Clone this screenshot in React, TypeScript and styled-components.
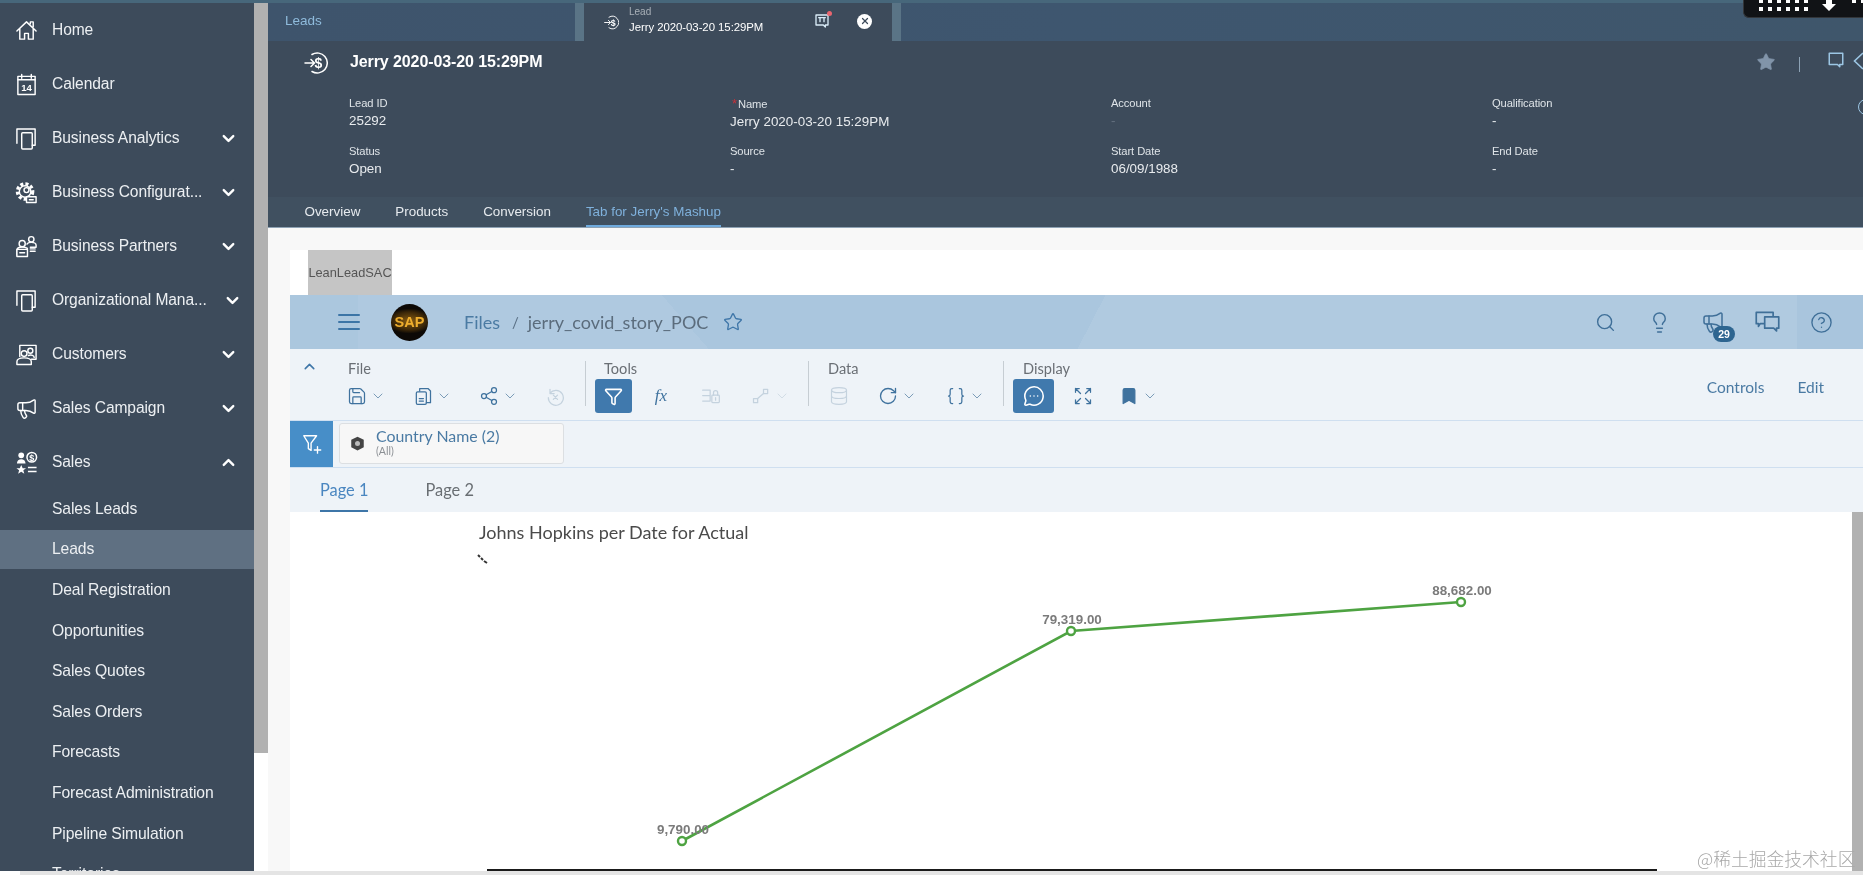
import React from "react";
import styled, { createGlobalStyle } from "styled-components";
import {
  Search, Lightbulb, Megaphone, CircleHelp, Star, Save, Share2, Funnel, Bookmark,
  ChevronDown, ChevronUp, RotateCw, Braces, MessageCircleMore, Database, X,
} from "lucide-react";

const Global = createGlobalStyle`
  html, body { margin: 0; padding: 0; width: 100%; height: 100%; overflow: hidden; background: #fff; }
  * { box-sizing: border-box; }
`;

const Page = styled.div`
  position: relative; width: 1863px; height: 875px; display: flex; flex-direction: column;
  overflow: hidden; background: #fff; font-family: "Liberation Sans", Arial, sans-serif;
  filter: blur(0.45px);
`;
const TopStrip = styled.div`height: 3px; flex: none; background: #47677b;`;
const Body = styled.div`flex: 1; display: flex; min-height: 0;`;
const BottomStrip = styled.div`height: 4px; flex: none; background: linear-gradient(to right, #fff 20px, #e4e4e4 20px);`;

const Sidebar = styled.nav`width: 254px; flex: none; background: #3d4b5b; overflow: hidden;`;
const SideRow = styled.div<{ $sub?: boolean; $active?: boolean; $trim?: number }>`
  display: flex; align-items: center; color: #eceff2;
  height: ${(p) => (p.$sub ? "40.6px" : "54px")};
  padding: 0 ${(p) => 16 - (p.$trim ?? 0)}px 0 ${(p) => (p.$sub ? 52 : 15)}px;
  font-size: ${(p) => (p.$sub ? "15.7px" : "15.6px")};
  background: ${(p) => (p.$active ? "linear-gradient(#5f7082, #5f7082) center / 100% 39px no-repeat" : "none")};
`;
const SideIcon = styled.span`
  width: 23px; height: 23px; flex: none; margin-right: 14px; display: flex; color: #fff;
  svg { width: 23px; height: 23px; }
`;
const SideLabel = styled.span`flex: 1; white-space: nowrap; min-width: 0; letter-spacing: -0.1px; padding-bottom: 1px;`;
const SideChevron = styled.span`flex: none; display: flex; color: #fff;`;

const ScrollTrack = styled.div`width: 14px; flex: none; background: #fff;`;
const ScrollThumb = styled.div`height: 750px; background: #b1b1b1;`;

const Main = styled.main`flex: 1; min-width: 0; display: flex; flex-direction: column; overflow: hidden;`;
const TabsRow = styled.div`
  height: 38px; flex: none; display: flex; align-items: stretch;
  background: linear-gradient(90deg, #3e546c, #3e566f 50%, #3f566b);
`;
const LeadsTab = styled.div`width: 307px; flex: none; padding: 0 0 3px 17px; display: flex; align-items: center; font-size: 13.5px; color: #8fbbdc;`;
const TabSplit = styled.div`width: 9px; flex: none; background: #5a7486;`;
const ActiveTab = styled.div`
  width: 308px; flex: none; background: #3d4b5b; display: flex; align-items: center; padding-left: 20px; color: #fff;
`;
const ActiveText = styled.div`margin-left: 10px; display: flex; flex-direction: column; width: 185px; padding-bottom: 5px;`;
const ActiveKind = styled.span`font-size: 10px; line-height: 13px; color: #a9b1b8;`;
const ActiveName = styled.span`font-size: 11.4px; line-height: 16px; margin-top: 1px; letter-spacing: -0.05px; white-space: nowrap;`;
const NoticeIcon = styled.span`position: relative; display: flex; width: 16px; height: 16px; margin-top: -2px; color: #d9ecf8;`;
const NoticeDot = styled.span`position: absolute; top: -2px; right: -2px; width: 5px; height: 5px; border-radius: 50%; background: #e8656f;`;
const CloseCircle = styled.span`
  margin-left: 27px; margin-top: -2px; width: 15px; height: 15px; border-radius: 50%; background: #fff; color: #3d4b5b;
  display: flex; align-items: center; justify-content: center;
`;

const Header = styled.header`height: 156px; flex: none; background: #3d4b5b; color: #fff;`;
const TitleRow = styled.div`height: 44px; display: flex; align-items: center; padding-left: 36px;`;
const Title = styled.h1`margin: 0 0 2px 22px; font-size: 16px; font-weight: 700; letter-spacing: -0.1px;`;
const TitleActions = styled.div`margin-left: auto; display: flex; align-items: center; color: #9cc6e4;`;
const StarAction = styled.span`display: flex; margin-top: -2px; color: #8194a9;`;
const ActionRule = styled.span`width: 1px; height: 15px; background: #8da2b5; margin: 3px 27px 0 23px;`;
const ActionBubble = styled.span`display: flex; margin-top: -6px;`;
const ActionEdge = styled.svg`width: 10px; height: 20px; margin: -4px 0 0 8px;`;

const FieldGrid = styled.div`
  display: grid; grid-template-columns: 381px 381px 381px 366px 20px; grid-auto-rows: 48px;
  padding: 9.5px 0 0 81px;
`;
const Field = styled.div`display: flex; flex-direction: column;`;
const FieldLabel = styled.span`font-size: 11.2px; line-height: 17px; color: #dfe4e8; letter-spacing: -0.1px;`;
const Required = styled.span`color: #c8303a; font-size: 13px; margin: 0 1px 0 2px;`;
const FieldValue = styled.span<{ $dim?: boolean }>`
  font-size: 13.4px; line-height: 17px; color: ${(p) => (p.$dim ? "#64717f" : "#e8ebee")};
`;
const EdgeCircle = styled.span`
  grid-column: 5; grid-row: 1; width: 16px; height: 16px; margin-top: 4px;
  border: 1.5px solid #9cc6e4; border-radius: 50%;
`;

const ObjectTabs = styled.div`
  height: 31px; flex: none; display: flex; gap: 35px; padding-left: 36.5px;
  background: #405060; border-bottom: 1px solid #8ea2b4;
`;
const ObjectTab = styled.div<{ $active?: boolean }>`
  height: 30px; display: flex; align-items: center; font-size: 13.4px; padding-top: 1px; white-space: nowrap;
  color: ${(p) => (p.$active ? "#7fb1dc" : "#e6eaee")};
  border-bottom: 2px solid ${(p) => (p.$active ? "#6faadd" : "transparent")};
`;

const WorkArea = styled.section`flex: 1; min-height: 0; background: #f8f8f8; padding: 22px 0 0 22px; display: flex;`;
const Mashup = styled.div`flex: 1; min-width: 0; background: #fff; display: flex; flex-direction: column; font-family: Lato, "Liberation Sans", sans-serif;`;
const LeanRow = styled.div`height: 45px; flex: none; padding-left: 18px; display: flex;`;
const LeanTag = styled.div`
  width: 84px; background: #c5c5c5; color: #555; font-family: "Liberation Sans", sans-serif; font-size: 12.8px;
  display: flex; align-items: center; justify-content: center; white-space: nowrap;
`;

const ShellBar = styled.div`
  height: 54px; flex: none; display: flex; align-items: center; padding: 0 15px 0 48px; color: #3f6f98;
  background:
    linear-gradient(to right, transparent calc(100% - 66px), #a9c5dd 0),
    linear-gradient(to right, #abc7de 68px, transparent 68px),
    linear-gradient(49deg, #afc9e0 316px, transparent 316px),
    linear-gradient(117.4deg, #aac6de 724px, transparent 724px),
    #b0cae0;
`;
const Hamburger = styled.span`
  width: 22px; height: 16px; flex: none; display: flex; flex-direction: column; justify-content: space-between;
  & > i { display: block; height: 2.4px; background: #3c75a6; border-radius: 1px; }
`;
const SapLogo = styled.span`
  width: 37px; height: 37px; flex: none; margin-left: 31px; border-radius: 50%; overflow: hidden;
  background: radial-gradient(ellipse 62% 34% at 50% 46%, #8a5d12, #3a2608 72%, #0d0906 100%);
  color: #eeae2e; font: 700 14.5px "Liberation Sans", sans-serif; display: flex; align-items: center; justify-content: center;
`;
const Crumbs = styled.div`margin-left: 36px; display: flex; align-items: center; font-size: 18px; white-space: nowrap;`;
const CrumbLink = styled.span`color: #4b7ba3;`;
const CrumbSep = styled.span`color: #5a7085; margin: 0 9px 0 12px; font-size: 15px;`;
const CrumbStory = styled.span`color: #5b6c7c;`;
const CrumbStar = styled.span`display: flex; margin-left: 15px; color: #3f76a8;`;
const ShellIcons = styled.div`margin-left: auto; display: flex;`;
const ShellIcon = styled.span`
  position: relative; width: 54px; height: 30px; display: flex; align-items: center; justify-content: center;
`;
const CountBadge = styled.span`
  position: absolute; left: 27px; top: 19px; width: 22px; height: 16px; border-radius: 8px; background: #2e6590;
  color: #fff; font: 700 10.5px/16px "Liberation Sans", sans-serif; text-align: center;
`;

const Toolbar = styled.div`
  height: 72px; flex: none; display: flex; background: #eef3f8; border-bottom: 1px solid #cfdff0;
`;
const CollapseCell = styled.div`width: 58px; flex: none; padding: 9px 0 0 11px; color: #3f76a8;`;
const ToolGroup = styled.div<{ $w: number; $labelInset: number; $rowInset: number }>`
  width: ${(p) => p.$w}px; flex: none; padding-top: 12px;
  & > label { display: block; height: 16px; line-height: 16px; margin-left: ${(p) => p.$labelInset}px; font-size: 14.6px; color: #6a6f75; }
  & > div { margin-left: ${(p) => p.$rowInset}px; }
`;
const ToolRow = styled.div<{ $gap: number }>`
  margin-top: 2px; height: 34px; display: flex; align-items: center; gap: ${(p) => p.$gap}px;
`;
const ToolItem = styled.span<{ $faded?: boolean }>`
  display: flex; align-items: center; gap: 3px; color: ${(p) => (p.$faded ? "#c4d2de" : "#3f729e")};
  & > svg:last-child:not(:first-child) { color: ${(p) => (p.$faded ? "#d2dde6" : "#7b9cb8")}; }
`;
const ToolGlyph = styled.span`width: 20px; height: 20px; display: flex; align-items: center; justify-content: center; font: italic 400 17px "Liberation Serif", serif;`;
const ToolButton = styled.span<{ $w: number; $trail: number }>`
  width: ${(p) => p.$w}px; height: 34px; flex: none; margin-right: ${(p) => p.$trail}px; background: #4079ad; border-radius: 3px; color: #fff;
  display: flex; align-items: center; justify-content: center;
`;
const ToolRule = styled.span`width: 1px; height: 45px; flex: none; margin-top: 12px; background: #c6cdd3;`;
const ToolLinks = styled.div`margin-left: auto; height: 28px; margin-top: 24px; padding-right: 39px; display: flex; align-items: center; gap: 33px; font-size: 15.5px; color: #4a7aa3;`;

const FilterRow = styled.div`height: 47px; flex: none; display: flex; background: #eef3f8; border-bottom: 1px solid #cfdff0;`;
const AddFilter = styled.span`width: 43px; flex: none; background: #478ec8; color: #fff; display: flex; align-items: center; justify-content: center;`;
const Token = styled.div`
  width: 225px; height: 41px; margin: 2px 0 0 6px; background: #f7f7f7; border: 1px solid #dcdfe2; border-radius: 3px;
  display: flex; align-items: center; padding-left: 10px;
`;
const TokenText = styled.div`margin: -2px 0 0 11px; display: flex; flex-direction: column;`;
const TokenName = styled.span`font-size: 15.9px; line-height: 18px; color: #4a7aa3;`;
const TokenSub = styled.span`font-size: 10.6px; line-height: 13px; color: #8b8f94;`;

const PageTabs = styled.div`height: 44px; flex: none; display: flex; gap: 57px; padding-left: 30px; background: #eef3f8;`;
const PageTab = styled.div<{ $active?: boolean }>`
  height: 44px; display: flex; align-items: center; font-size: 16.4px;
  color: ${(p) => (p.$active ? "#4a86c0" : "#696e73")};
  border-bottom: 2.5px solid ${(p) => (p.$active ? "#3e76a8" : "transparent")};
`;

const Canvas = styled.div`flex: 1; min-height: 0; display: flex; background: #fff;`;
const ChartSvg = styled.svg`flex: 1; min-width: 0; height: 100%; display: block;`;
const ChartTitle = styled.text`font: 18px Lato, "Liberation Sans", sans-serif; fill: #4a4a4a;`;
const PointLabel = styled.text`font: 700 13.4px "Liberation Sans", sans-serif; fill: #7b7b7b; text-anchor: middle;`;
const CanvasScroll = styled.div`width: 11px; flex: none; background: #b1b1b1;`;

const Watermark = styled.div`
  position: absolute; left: 1697px; top: 847px; font: 300 17.8px/22px "Noto Sans CJK SC", sans-serif; color: #a8a8a8; white-space: nowrap;
`;
const Recorder = styled.div`
  position: absolute; top: 0; right: 0; width: 120px; height: 18px; background: #111316; border: 1px solid #33363a;
  border-top: 0; border-right: 0; border-radius: 0 0 0 6px; overflow: hidden; display: flex; padding-left: 15px; color: #fff;
`;
const DotGrid = styled.div`
  display: grid; grid-template-columns: repeat(6, 4px); column-gap: 5px; row-gap: 4px; margin-top: -1px; align-content: start;
  & > i { width: 4px; height: 4px; background: #fff; }
`;
const RecorderArrow = styled.span`display: flex; margin: -1px 16px 0 14px;`;

const SW = { fill: "none", stroke: "currentColor", strokeWidth: 1.5, strokeLinecap: "round" as const, strokeLinejoin: "round" as const };
const Ic = ({ children, size = 24 }: { children: React.ReactNode; size?: number }) => (
  <svg viewBox="0 0 24 24" width={size} height={size} {...SW}>{children}</svg>
);

const HomeIcon = () => <Ic><path d="M2 12.5 12 3l10 9.5M5 10v11h5v-6h4v6h5V10M16 5V3h3v5" /></Ic>;
const CalendarIcon = () => (
  <Ic>
    <rect x="3" y="3.5" width="18" height="19" />
    <path d="M7 1.5v4M17 1.5v4M3 7h18" />
    <text x="12" y="18.5" fill="currentColor" stroke="none" fontSize="10" fontWeight="700" textAnchor="middle" fontFamily="Liberation Sans">14</text>
  </Ic>
);
const StackIcon = () => <Ic><path d="M2 17V2h19v17h-3" /><rect x="7" y="6" width="11" height="17" rx="1" /></Ic>;
const ConfigIcon = () => (
  <Ic>
    <circle cx="10.5" cy="11" r="8" strokeWidth="3.4" strokeDasharray="3.2 2.2" strokeLinecap="butt" />
    <circle cx="10.5" cy="11" r="6" />
    <circle cx="12" cy="9.5" r="2.6" />
    <rect x="12" y="16.5" width="10" height="6" fill="#3d4b5b" />
    <path d="M15 19.5h4" />
  </Ic>
);
const PartnersIcon = () => (
  <Ic>
    <circle cx="7.5" cy="9" r="3.2" /><circle cx="17" cy="4.5" r="2.8" />
    <path d="M2 21v-5c0-2 2-3.5 5.5-3.5S13 14 13 14M12.5 9.5c.5-1 2-1.8 4.5-1.8s5 1 5 3v2h-6" />
    <rect x="2" y="15" width="11" height="7.5" fill="#3d4b5b" /><path d="M5 18.5h5M16 14.5h5M16 17h5" />
  </Ic>
);
const CustomersIcon = () => (
  <Ic>
    <path d="M5 14V2.5h17V17h-5" />
    <circle cx="9.5" cy="11" r="3" /><circle cx="16" cy="8" r="2.6" />
    <path d="M2 22.5v-3c0-2.4 3-4 7.5-4s7.5 1.6 7.5 4v3zM14 13c3-1 6 0 6 2" />
  </Ic>
);
const SalesIcon = () => (
  <svg viewBox="0 0 24 24" width={24} height={24} fill="currentColor">
    <circle cx="6.5" cy="4.5" r="3" />
    <path d="M2 13c0-3 2-4.5 4.5-4.5S11 10 11 13z" />
    <circle cx="17.5" cy="6.5" r="5" fill="none" stroke="currentColor" strokeWidth="1.6" />
    <text x="17.5" y="10" fontSize="9.5" fontWeight="700" textAnchor="middle" fontFamily="Liberation Sans">$</text>
    <path d="M6.5 14.5 8 18h3.5l-2.8 2.2 1 3.6-3.2-2.2-3.2 2.2 1-3.6L1.5 18H5z" />
    <path d="M13.5 16.5h9v1.6h-9zM13.5 20.5h9v1.6h-9z" />
  </svg>
);

const LeadIcon = ({ size }: { size: number }) => (
  <svg viewBox="0 0 24 24" width={size} height={size} {...SW}>
    <path d="M8 3.5A10 10 0 1 1 8 20.5M1 12h9M7 8.5l3.5 3.5L7 15.5" />
    <text x="14.5" y="17" fill="currentColor" stroke="none" fontSize="14" fontWeight="700" textAnchor="middle" fontFamily="Liberation Sans">$</text>
  </svg>
);
const BubbleIcon = ({ size, bar }: { size: number; bar?: boolean }) => (
  <svg viewBox="0 0 24 24" width={size} height={size} {...SW} strokeWidth={2}>
    <path d="M3 3h18v15h-4v3l-3-3H3z" />
    {bar && <path d="M9 7v6M15 7v6M7 7h10" />}
  </svg>
);
const CopyDoc = () => <Ic size={20}><path d="M8 6V3h10l3 3v14h-5" /><rect x="4" y="7" width="12" height="15" rx="1.5" /><path d="M7.5 15h5M7.5 18h5" /></Ic>;
const UndoX = () => <Ic size={20}><path d="M6 4v5h5M6 8.5A9 9 0 1 1 4 14" /><path d="m10 11 5 5M15 11l-5 5" /></Ic>;
const SplitLock = () => <Ic size={20}><path d="M2 5h9v13H2M2 11.5h8" /><rect x="13" y="11" width="9" height="9" rx="1" /><path d="M15 11V8a2.5 2.5 0 0 1 5 0v3M17.5 14v3" /></Ic>;
const LinkDim = () => <Ic size={20}><rect x="3" y="15" width="5" height="5" /><rect x="15" y="4" width="5" height="5" /><path d="M8 15l7-6" /></Ic>;
const ExpandArrows = () => <Ic size={20}><path d="m3 3 6 6M3 7.5V3h4.5M21 3l-6 6M21 7.5V3h-4.5M3 21l6-6M3 16.5V21h4.5M21 21l-6-6M21 16.5V21h-4.5" /></Ic>;
const FunnelAdd = () => <Ic size={22}><path d="M3 3h14l-6 8v8l-3-2v-6z" /><path d="M18 15v7M14.5 18.5h7" /></Ic>;
const ChatPair = () => <Ic size={27}><path d="M2 3h15v4H9.5v6H5.5L4 15.5V13H2zM9.5 7H22v10h-2v2.5L17.5 17h-8z" /></Ic>;
const CubeIcon = () => (
  <svg viewBox="0 0 24 24" width={15} height={15} fill="#444">
    <path d="M12 1 22 6v12l-10 5L2 18V6z" />
    <circle cx="12" cy="12" r="4" fill="#bbb" />
  </svg>
);

const mainItems: { label: string; icon: React.ReactNode; chevron?: "down" | "up"; trim?: number }[] = [
  { label: "Home", icon: <HomeIcon /> },
  { label: "Calendar", icon: <CalendarIcon /> },
  { label: "Business Analytics", icon: <StackIcon />, chevron: "down" },
  { label: "Business Configurat...", icon: <ConfigIcon />, chevron: "down" },
  { label: "Business Partners", icon: <PartnersIcon />, chevron: "down" },
  { label: "Organizational Mana...", icon: <StackIcon />, chevron: "down", trim: 4 },
  { label: "Customers", icon: <CustomersIcon />, chevron: "down" },
  { label: "Sales Campaign", icon: <Megaphone strokeWidth={1.5} />, chevron: "down" },
  { label: "Sales", icon: <SalesIcon />, chevron: "up" },
];
const subItems = [
  "Sales Leads", "Leads", "Deal Registration", "Opportunities", "Sales Quotes", "Sales Orders",
  "Forecasts", "Forecast Administration", "Pipeline Simulation", "Territories",
];
const fields = [
  { label: "Lead ID", value: "25292" },
  { label: "Name", value: "Jerry 2020-03-20 15:29PM", required: true },
  { label: "Account", value: "-", dim: true },
  { label: "Qualification", value: "-" },
  { label: "Status", value: "Open" },
  { label: "Source", value: "-" },
  { label: "Start Date", value: "06/09/1988" },
  { label: "End Date", value: "-" },
];
const Chev = () => <ChevronDown size={16} strokeWidth={1.5} />;
const points = [
  { x: 392, y: 329, label: "9,790.00" },
  { x: 781, y: 119, label: "79,319.00" },
  { x: 1171, y: 90, label: "88,682.00" },
];

export default function App() {
  return (
    <Page>
      <Global />
      <TopStrip />
      <Body>
        <Sidebar>
          {mainItems.map((m) => (
            <SideRow key={m.label} $trim={m.trim}>
              <SideIcon>{m.icon}</SideIcon>
              <SideLabel>{m.label}</SideLabel>
              {m.chevron && (
                <SideChevron>
                  {m.chevron === "down" ? <ChevronDown size={19} strokeWidth={3} /> : <ChevronUp size={19} strokeWidth={3} />}
                </SideChevron>
              )}
            </SideRow>
          ))}
          {subItems.map((s) => (
            <SideRow key={s} $sub $active={s === "Leads"}>
              <SideLabel>{s}</SideLabel>
            </SideRow>
          ))}
        </Sidebar>
        <ScrollTrack><ScrollThumb /></ScrollTrack>
        <Main>
          <TabsRow>
            <LeadsTab>Leads</LeadsTab>
            <TabSplit />
            <ActiveTab>
              <LeadIcon size={15} />
              <ActiveText>
                <ActiveKind>Lead</ActiveKind>
                <ActiveName>Jerry 2020-03-20 15:29PM</ActiveName>
              </ActiveText>
              <NoticeIcon><BubbleIcon size={16} bar /><NoticeDot /></NoticeIcon>
              <CloseCircle><X size={10} strokeWidth={3} /></CloseCircle>
            </ActiveTab>
            <TabSplit />
          </TabsRow>
          <Header>
            <TitleRow>
              <LeadIcon size={24} />
              <Title>Jerry 2020-03-20 15:29PM</Title>
              <TitleActions>
                <StarAction><Star size={20} fill="currentColor" strokeWidth={1} /></StarAction>
                <ActionRule />
                <ActionBubble><BubbleIcon size={18} /></ActionBubble>
                <ActionEdge viewBox="0 0 10 20" fill="none" stroke="currentColor" strokeWidth="1.6">
                  <path d="M10 2 1.5 10l8.5 8" />
                </ActionEdge>
              </TitleActions>
            </TitleRow>
            <FieldGrid>
              {fields.slice(0, 4).map((f) => (
                <Field key={f.label}>
                  <FieldLabel>{f.required && <Required>*</Required>}{f.label}</FieldLabel>
                  <FieldValue $dim={f.dim}>{f.value}</FieldValue>
                </Field>
              ))}
              <EdgeCircle />
              {fields.slice(4).map((f) => (
                <Field key={f.label}>
                  <FieldLabel>{f.label}</FieldLabel>
                  <FieldValue>{f.value}</FieldValue>
                </Field>
              ))}
            </FieldGrid>
          </Header>
          <ObjectTabs>
            <ObjectTab>Overview</ObjectTab>
            <ObjectTab>Products</ObjectTab>
            <ObjectTab>Conversion</ObjectTab>
            <ObjectTab $active>Tab for Jerry's Mashup</ObjectTab>
          </ObjectTabs>
          <WorkArea>
            <Mashup>
              <LeanRow><LeanTag>LeanLeadSAC</LeanTag></LeanRow>
              <ShellBar>
                <Hamburger><i /><i /><i /></Hamburger>
                <SapLogo>SAP</SapLogo>
                <Crumbs>
                  <CrumbLink>Files</CrumbLink>
                  <CrumbSep>/</CrumbSep>
                  <CrumbStory>jerry_covid_story_POC</CrumbStory>
                  <CrumbStar><Star size={20} strokeWidth={1.6} /></CrumbStar>
                </Crumbs>
                <ShellIcons>
                  <ShellIcon><Search size={21} strokeWidth={1.6} /></ShellIcon>
                  <ShellIcon><Lightbulb size={23} strokeWidth={1.5} /></ShellIcon>
                  <ShellIcon><Megaphone size={24} strokeWidth={1.5} /><CountBadge>29</CountBadge></ShellIcon>
                  <ShellIcon><ChatPair /></ShellIcon>
                  <ShellIcon><CircleHelp size={23} strokeWidth={1.4} /></ShellIcon>
                </ShellIcons>
              </ShellBar>
              <Toolbar>
                <CollapseCell><ChevronUp size={17} strokeWidth={2.2} /></CollapseCell>
                <ToolGroup $w={237} $labelInset={0} $rowInset={-1}>
                  <label>File</label>
                  <ToolRow $gap={27}>
                    <ToolItem><Save size={20} strokeWidth={1.5} /><Chev /></ToolItem>
                    <ToolItem><CopyDoc /><Chev /></ToolItem>
                    <ToolItem><Share2 size={20} strokeWidth={1.5} /><Chev /></ToolItem>
                    <ToolItem $faded><UndoX /></ToolItem>
                  </ToolRow>
                </ToolGroup>
                <ToolRule />
                <ToolGroup $w={222} $labelInset={18} $rowInset={9}>
                  <label>Tools</label>
                  <ToolRow $gap={30}>
                    <ToolButton $w={37} $trail={-11}><Funnel size={19} strokeWidth={2} /></ToolButton>
                    <ToolItem><ToolGlyph>fx</ToolGlyph></ToolItem>
                    <ToolItem $faded><SplitLock /></ToolItem>
                    <ToolItem $faded><LinkDim /><Chev /></ToolItem>
                  </ToolRow>
                </ToolGroup>
                <ToolRule />
                <ToolGroup $w={194} $labelInset={19} $rowInset={20}>
                  <label>Data</label>
                  <ToolRow $gap={29}>
                    <ToolItem $faded><Database size={20} strokeWidth={1.4} /></ToolItem>
                    <ToolItem><RotateCw size={20} strokeWidth={1.6} /><Chev /></ToolItem>
                    <ToolItem><Braces size={20} strokeWidth={1.5} /><Chev /></ToolItem>
                  </ToolRow>
                </ToolGroup>
                <ToolRule />
                <ToolGroup $w={220} $labelInset={19} $rowInset={9}>
                  <label>Display</label>
                  <ToolRow $gap={26}>
                    <ToolButton $w={41} $trail={-7}><MessageCircleMore size={22} strokeWidth={1.7} /></ToolButton>
                    <ToolItem><ExpandArrows /></ToolItem>
                    <ToolItem><Bookmark size={20} fill="currentColor" strokeWidth={1.5} /><Chev /></ToolItem>
                  </ToolRow>
                </ToolGroup>
                <ToolLinks><span>Controls</span><span>Edit</span></ToolLinks>
              </Toolbar>
              <FilterRow>
                <AddFilter><FunnelAdd /></AddFilter>
                <Token>
                  <CubeIcon />
                  <TokenText>
                    <TokenName>Country Name (2)</TokenName>
                    <TokenSub>(All)</TokenSub>
                  </TokenText>
                </Token>
              </FilterRow>
              <PageTabs>
                <PageTab $active>Page 1</PageTab>
                <PageTab>Page 2</PageTab>
              </PageTabs>
              <Canvas>
                <ChartSvg viewBox="0 0 1562 359" preserveAspectRatio="xMinYMin slice">
                  <ChartTitle x="189" y="27">Johns Hopkins per Date for Actual</ChartTitle>
                  <path d="M188 43l2 2M191 46l2 2M194 49l3 2" stroke="#333" strokeWidth="2" fill="none" />
                  <polyline points={points.map((p) => `${p.x},${p.y}`).join(" ")} fill="none" stroke="#4ea342" strokeWidth="2.6" />
                  {points.map((p) => (
                    <circle key={p.x} cx={p.x} cy={p.y} r="4" fill="#fff" stroke="#4ea342" strokeWidth="2.4" />
                  ))}
                  {points.map((p) => (
                    <PointLabel key={p.label} x={p.x + 1} y={p.y - 7}>{p.label}</PointLabel>
                  ))}
                  <rect x="197" y="357" width="1170" height="2" fill="#1a1a1a" />
                </ChartSvg>
                <CanvasScroll />
              </Canvas>
            </Mashup>
          </WorkArea>
        </Main>
      </Body>
      <BottomStrip />
      <Recorder>
        <DotGrid>{Array.from({ length: 12 }, (_, i) => <i key={i} />)}</DotGrid>
        <RecorderArrow>
          <svg width="14" height="12" viewBox="0 0 14 12" fill="#fff"><path d="M4 0h6v5h4l-7 7-7-7h4z" /></svg>
        </RecorderArrow>
        <DotGrid>{Array.from({ length: 2 }, (_, i) => <i key={i} />)}</DotGrid>
      </Recorder>
      <Watermark>@稀土掘金技术社区</Watermark>
    </Page>
  );
}
